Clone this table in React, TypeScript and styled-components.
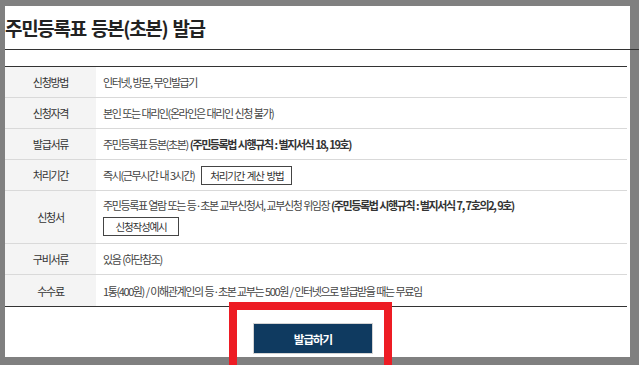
import React from "react";
import styled, { createGlobalStyle } from "styled-components";

const Global = createGlobalStyle`
  html, body {
    margin: 0;
    padding: 0;
    background: #808080;
  }
  body {
    font-family: "Noto Sans CJK KR", "Noto Sans", sans-serif;
    color: #333;
  }
  * { box-sizing: border-box; }
`;

const Screen = styled.div`
  width: 639px;
  height: 365px;
  overflow: hidden;
  background: #808080;
  padding: 6px 0 0 5px;
`;

const Panel = styled.div`
  position: relative;
  width: 625px;
  height: 351px;
  background: #fff;
`;

const Header = styled.div`
  height: 44px;
  margin-right: -9px;
  display: flex;
  align-items: center;
  border-bottom: 1px solid #333;
`;

const Title = styled.h1`
  margin: 0;
  font-size: 19px;
  font-weight: 700;
  letter-spacing: -1.3px;
  word-spacing: 2px;
  color: #222;
  line-height: 1;
`;

const Table = styled.div`
  margin-top: 16px;
  width: 622px;
  border-top: 1px solid #333;
  border-bottom: 1px solid #333;
`;

const Row = styled.div`
  display: grid;
  grid-template-columns: 91px 1fr;
  min-height: 31px;
  border-bottom: 1px solid #d9d9d9;
  &:last-child {
    border-bottom: none;
  }
`;

const Label = styled.div`
  background: #f4f4f4;
  display: flex;
  align-items: center;
  justify-content: center;
  font-size: 11px;
  letter-spacing: -1.3px;
  color: #333;
`;

const Value = styled.div<{ $stack?: boolean }>`
  display: flex;
  flex-direction: ${(p) => (p.$stack ? "column" : "row")};
  align-items: ${(p) => (p.$stack ? "flex-start" : "center")};
  gap: ${(p) => (p.$stack ? "4px" : "7px")};
  padding: ${(p) => (p.$stack ? "6px 7px 7px" : "0 7px")};
  font-size: 11px;
  letter-spacing: -1.4px;
  word-spacing: 0.7px;
  line-height: 16px;
  color: #444;
`;

const Strong = styled.b`
  font-weight: 700;
  color: #333;
`;

const SmallButton = styled.button`
  font-family: inherit;
  font-size: 10.5px;
  letter-spacing: -1.2px;
  word-spacing: 1.5px;
  color: #333;
  background: #fff;
  border: 1px solid #444;
  height: 19px;
  line-height: 17px;
  padding: 0 8px;
  cursor: pointer;
`;

const WideButton = styled(SmallButton)`
  width: 76px;
`;

const Actions = styled.div`
  display: flex;
  justify-content: center;
  width: 622px;
  padding: 16px 6px 0 0;
`;

const IssueButton = styled.button`
  width: 120px;
  height: 31px;
  background: #0f3a60;
  border: 1px solid #d4d4d4;
  color: #fff;
  font-family: inherit;
  font-size: 11.5px;
  font-weight: 700;
  letter-spacing: -1px;
  cursor: pointer;
`;

const Highlight = styled.div`
  position: absolute;
  left: 224px;
  top: 296px;
  width: 163px;
  height: 90px;
  border: 8px solid #ed1c24;
  pointer-events: none;
`;

type Item = { label: string; content: React.ReactNode; stack?: boolean };

const items: Item[] = [
  { label: "신청방법", content: <span>인터넷, 방문, 무인발급기</span> },
  { label: "신청자격", content: <span>본인 또는 대리인(온라인은 대리인 신청 불가)</span> },
  {
    label: "발급서류",
    content: (
      <span>
        주민등록표 등본(초본) <Strong>(주민등록법 시행규칙 : 별지서식 18, 19호)</Strong>
      </span>
    ),
  },
  {
    label: "처리기간",
    content: (
      <>
        <span>즉시(근무시간 내 3시간)</span>
        <SmallButton type="button">처리기간 계산 방법</SmallButton>
      </>
    ),
  },
  {
    label: "신청서",
    stack: true,
    content: (
      <>
        <span>
          주민등록표 열람 또는 등·초본 교부신청서, 교부신청 위임장{" "}
          <Strong>(주민등록법 시행규칙 : 별지서식 7, 7호의2, 9호)</Strong>
        </span>
        <WideButton type="button">신청작성예시</WideButton>
      </>
    ),
  },
  { label: "구비서류", content: <span>있음 (하단참조)</span> },
  {
    label: "수수료",
    content: <span>1통(400원) / 이해관계인의 등·초본 교부는 500원 / 인터넷으로 발급받을 때는 무료임</span>,
  },
];

export default function App() {
  return (
    <Screen>
      <Global />
      <Panel>
        <Header>
          <Title>주민등록표 등본(초본) 발급</Title>
        </Header>
        <Table>
          {items.map((it) => (
            <Row key={it.label}>
              <Label>{it.label}</Label>
              <Value $stack={it.stack}>{it.content}</Value>
            </Row>
          ))}
        </Table>
        <Actions>
          <IssueButton type="button">발급하기</IssueButton>
        </Actions>
        <Highlight />
      </Panel>
    </Screen>
  );
}
